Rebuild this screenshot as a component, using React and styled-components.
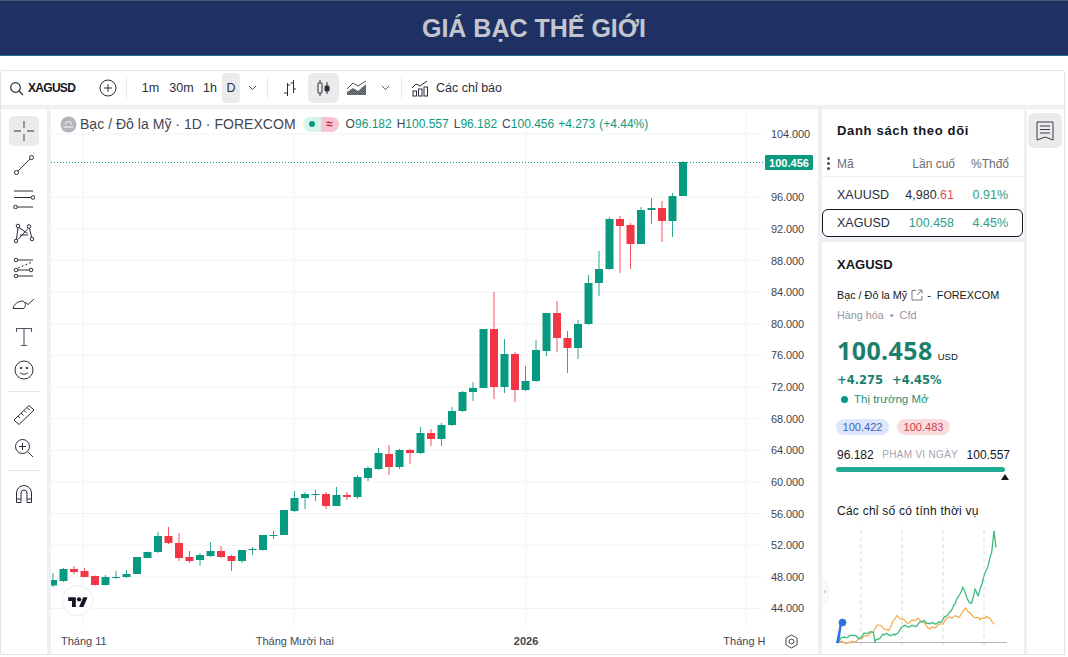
import React from "react";
import styled, { createGlobalStyle } from "styled-components";

const GREEN = "#089981";
const RED = "#f23645";
const INK = "#2a2e39";

const Global = createGlobalStyle`
  html, body { margin: 0; padding: 0; background: #fff; overflow: hidden; }
  body { width: 1068px; height: 657px; font-family: "Liberation Sans", Arial, sans-serif; color: #131722; }
`;

// candle: [up?, bodyTop, bodyBottom, wickTop, wickBottom]
const CANDLES = [
  [1,580,585.5,573,587],[1,569,581,568,582],[0,569,572,566,574],[0,571,577,568,577],[0,576,585,575.5,585.5],
  [1,577,585,575,585.5],[1,577,577.8,571,579],[1,574,577,570,578],[1,557,574,557,574],[1,552,558,551.5,558],
  [1,536,552,532,553],[0,536,543,527,544],[0,543,558,533,561],[0,557,561,551,563],[1,555,560,553,566],
  [1,551,556,542,557],[0,551,557,546,558],[0,556,561,555,571],[1,550,561,550,563],[1,549,550,547,555],
  [1,535,550,535,550.5],[1,535,535.8,531,539],[1,510,535,510,535],[1,498,511,491,512],[1,494,498,492,509],
  [1,494,494.8,490,501],[0,494,506,492,509],[1,495,506,487,506],[0,495,497,492,500],[1,477,497,475,499],
  [1,468,478,466,481],[1,453,469,448,470],[0,454,467,445,475],[1,450,467,449,469],[0,450,453,449,464],
  [1,433,453,427,454],[0,433,439,429,446],[1,425,439,423,446],[1,411,425,407,426],[1,392,411,391,412],
  [1,388,392,382,401],[1,329,388,329,388],[0,329,387,292,399],[1,354,387,339,393],[0,354,390,352,402],
  [1,381,390,366,391],[1,350,381,340,382],[1,313,351,313,356],[0,313,338,301,352],[0,338,348,331,373],
  [1,324,348,320,359],[1,283,324,275,325],[1,269,283,251,296],[1,219,269,217,270],[0,219,226,216,273],
  [0,225,244,223,269],[1,210,244,207,244],[1,208,210,198,224],[0,208,221,201,242],[1,196,221,193,237],
  [1,162,196,161,196],
];

const PRICES = ["104.000","100.000","96.000","92.000","88.000","84.000","80.000","76.000","72.000","68.000","64.000","60.000","56.000","52.000","48.000","44.000"];
const GRID_Y = PRICES.map((_, i) => 134 + i * 31.63);
const GRID_X = [83, 294, 526, 746];

const GREEN_LINE = [[50,460],[70,445],[100,440],[120,447],[135,432],[160,430],[165,458],[190,436],[225,438],[250,412],[285,412],[310,395],[330,405],[360,400],[385,375],[405,345],[428,295],[445,335],[455,342],[465,300],[475,320],[490,268],[503,235],[515,190],[522,125],[528,175]];
const ORANGE_LINE = [[50,458],[90,462],[120,450],[150,435],[175,408],[205,425],[230,380],[265,402],[295,387],[330,420],[365,405],[385,385],[420,382],[437,357],[455,378],[480,392],[500,382],[525,405]];

// zoomed crop coordinates to page coordinates, with a little wobble so it reads as a price line
function seasonal(points, amp) {
  const out = [];
  points.forEach((p, i) => {
    const next = points[i + 1];
    const x0 = 820 + p[0] / 3, y0 = 490 + p[1] / 3;
    if (!next) { out.push(`${x0},${y0}`); return; }
    const x1 = 820 + next[0] / 3, y1 = 490 + next[1] / 3;
    const steps = Math.max(1, Math.round((x1 - x0) / 1.2));
    for (let s = 0; s < steps; s++) {
      const t = s / steps;
      const n = s === 0 ? 0 : Math.sin((x0 + s) * 7.3) * amp;
      out.push(`${(x0 + (x1 - x0) * t).toFixed(1)},${(y0 + (y1 - y0) * t + n).toFixed(1)}`);
    }
  });
  return out.join(" ");
}

const Header = styled.header`
  height: 53px;
  background: #1f3163;
  border-top: 1px solid #4a5674;
  border-bottom: 1px solid #1d6a8c;
  display: flex;
  align-items: center;
  justify-content: center;
  padding-top: 1px;
  box-sizing: content-box;
  margin-bottom: 14px;
`;
const Title = styled.h1`
  margin: 0;
  font-size: 25px;
  line-height: 1;
  font-weight: 700;
  color: #c3c6cf;
`;
const Widget = styled.div`
  width: 1065px;
  height: 585px;
  box-sizing: border-box;
  background: #eef0f3;
  border: 1px solid #e0e3e8;
  border-radius: 3px 3px 0 0;
  display: flex;
  flex-direction: column;
  gap: 4px;
`;
const TopBar = styled.div`
  height: 34px;
  flex: none;
  background: #fff;
  display: flex;
  align-items: center;
  padding-left: 8px;
  font-size: 12.5px;
  color: ${INK};
`;
const Symbol = styled.span`
  font-weight: 700;
  font-size: 12px;
  margin-left: 4px;
  width: 69px;
  letter-spacing: -0.7px;
  color: #131722;
`;
const Sep = styled.span`
  width: 1px;
  height: 20px;
  background: #e6e8ec;
  margin: 0 ${(p) => p.$m || 8}px;
`;
const Interval = styled.span`
  height: 30px;
  width: ${(p) => p.$w || 24}px;
  display: flex;
  align-items: center;
  justify-content: center;
  border-radius: 4px;
  background: ${(p) => (p.$on ? "#ebebeb" : "transparent")};
`;
const IconBtn = styled.span`
  height: 30px;
  width: ${(p) => p.$w || 30}px;
  display: flex;
  align-items: center;
  justify-content: center;
  border-radius: 5px;
  background: ${(p) => (p.$on ? "#ebebeb" : "transparent")};
`;
const BarLabel = styled.span`
  margin-left: 4px;
`;
const Main = styled.div`
  flex: 1;
  min-height: 0;
  display: flex;
`;
const ToolRail = styled.nav`
  width: 46px;
  flex: none;
  background: #fff;
  display: flex;
  flex-direction: column;
  align-items: center;
  padding: 7px 0 0 0;
  box-sizing: border-box;
  margin-right: 4px;
`;
const Tool = styled.span`
  width: 30px;
  height: ${(p) => p.$h || 34.3}px;
  margin-bottom: ${(p) => p.$mb || 0}px;
  display: flex;
  align-items: center;
  justify-content: center;
  border-radius: 5px;
  flex: none;
  background: ${(p) => (p.$on ? "#ebebeb" : "transparent")};
`;
const ToolRule = styled.span`
  width: 32px;
  height: 1px;
  background: #e6e8ec;
  margin: 5px 0 6px;
  flex: none;
`;
const ChartPanel = styled.section`
  width: 767px;
  flex: none;
  background: #fff;
  position: relative;
  display: flex;
  flex-direction: column;
  margin-right: 4px;
`;
const PlotRow = styled.div`
  flex: 1;
  min-height: 0;
  display: flex;
`;
const Plot = styled.svg`
  width: 712px;
  height: 519px;
  display: block;
  flex: none;
`;
const PriceAxis = styled.div`
  flex: 1;
  padding: 9.2px 0 0 8px;
  display: grid;
  grid-auto-rows: 31.63px;
  align-items: center;
  font-size: 11px;
  color: #434651;
  letter-spacing: -0.1px;
`;
const Price = styled.span`
  visibility: ${(p) => (p.$hide ? "hidden" : "visible")};
`;
const PriceTag = styled.span`
  position: absolute;
  left: 714px;
  top: 46px;
  width: 48px;
  height: 15px;
  background: #0b9a80;
  color: #fff;
  font-size: 11px;
  font-weight: 700;
  display: flex;
  align-items: center;
  justify-content: center;
  border-radius: 1px;
`;
const Legend = styled.div`
  position: absolute;
  left: 9px;
  top: 6px;
  height: 18px;
  display: flex;
  align-items: center;
`;
const LegendTitle = styled.span`
  font-size: 14px;
  color: #434651;
  margin-left: 3px;
  letter-spacing: 0.03px;
  white-space: nowrap;
`;
const StatusPill = styled.span`
  display: flex;
  height: 15px;
  margin: 0 7px;
  width: 36px;
  border-radius: 8px;
  overflow: hidden;
  background: #d8f3ec;
  font-size: 12px;
`;
const PillDot = styled.span`
  flex: 1;
  display: flex;
  align-items: center;
  justify-content: center;
  &::before {
    content: "";
    width: 6px;
    height: 6px;
    border-radius: 50%;
    background: ${GREEN};
  }
`;
const PillDelayed = styled.span`
  width: 18px;
  background: #f9c4d2;
  color: #b3274a;
  display: flex;
  align-items: center;
  justify-content: center;
  font-weight: 700;
`;
const Ohlc = styled.span`
  font-size: 12px;
  color: #0b9a80;
  white-space: nowrap;
  margin-right: ${(p) => p.$mr || 0}px;
  b {
    font-weight: 400;
    color: #434651;
  }
`;
const Logo = styled.span`
  position: absolute;
  left: 12px;
  top: 477px;
  width: 29px;
  height: 29px;
  border-radius: 50%;
  background: #fff;
  box-shadow: 0 0 0 1px #eceef1;
  display: flex;
  align-items: center;
  justify-content: center;
`;
const TimeAxis = styled.div`
  height: 26px;
  flex: none;
  display: flex;
  align-items: center;
  padding-left: 10px;
  font-size: 11px;
  color: #434651;
  position: relative;
`;
const TimeLabel = styled.span`
  margin-right: ${(p) => p.$mr}px;
  font-weight: ${(p) => (p.$bold ? 700 : 400)};
  white-space: nowrap;
`;
const TimeClip = styled.span`
  width: 42px;
  overflow: hidden;
  white-space: nowrap;
`;
const Gear = styled.span`
  position: absolute;
  left: 733px;
  top: 6px;
  display: flex;
`;
const WatchColumn = styled.div`
  width: 202px;
  flex: none;
  display: flex;
  flex-direction: column;
  gap: 5px;
  position: relative;
  margin-right: 3px;
`;
const Handle = styled.span`
  position: absolute;
  left: 0;
  top: 471px;
  width: 5px;
  height: 21px;
  background: #fbfbfc;
  border: 1px solid #f0f1f3;
  border-left: 0;
  border-radius: 0 3px 3px 0;
  font-size: 8px;
  color: #9598a1;
  display: flex;
  align-items: center;
  justify-content: center;
`;
const WatchPanel = styled.div`
  background: #fff;
  height: 128px;
  flex: none;
  position: relative;
`;
const WatchTitle = styled.div`
  font-size: 13px;
  font-weight: 700;
  letter-spacing: 0.68px;
  padding: 14px 0 0 15px;
  height: 30px;
  box-sizing: border-box;
  color: #131722;
`;
const Grip = styled.span`
  position: absolute;
  left: 5px;
  top: 48px;
  width: 3px;
  height: 3px;
  border-radius: 50%;
  background: #50535e;
  box-shadow: 0 5px 0 #50535e, 0 10px 0 #50535e;
`;
const ColHead = styled.div`
  display: grid;
  grid-template-columns: 1fr 60px 54px;
  padding: 12px 15px 0 15px;
  height: 38px;
  align-items: center;
  font-size: 12px;
  color: #6a6d78;
  border-bottom: 1px solid #eceef1;
  box-sizing: border-box;
  text-align: right;
  span:first-child { text-align: left; }
`;
const Row = styled.div`
  display: grid;
  grid-template-columns: 1fr 60px 54px;
  padding: 0 14px;
  height: 26px;
  align-items: center;
  font-size: 12.5px;
  color: #2a2e39;
  text-align: right;
  border: 1px solid ${(p) => (p.$on ? "#131722" : "transparent")};
  border-radius: 6px;
  margin-right: 1px;
  margin-top: ${(p) => p.$mt || 0}px;
  box-sizing: content-box;
  span:first-child { text-align: left; }
`;
const Up = styled.span`
  color: #2f9e88;
`;
const Down = styled.span`
  color: #e0505c;
`;
const DetailPanel = styled.div`
  flex: 1;
  background: #fff;
  padding: 15px 0 0 15px;
  min-height: 0;
`;
const DetailSym = styled.div`
  font-size: 13px;
  font-weight: 700;
  line-height: 15px;
  color: #131722;
`;
const Desc = styled.div`
  font-size: 10.8px;
  line-height: 14px;
  margin-top: 16px;
  display: flex;
  align-items: center;
  white-space: nowrap;
  color: #131722;
  svg { margin: 0 4px; }
`;
const Meta = styled.div`
  font-size: 10.8px;
  line-height: 14px;
  margin-top: 6px;
  color: #9598a1;
`;
const Bullet = styled.span`
  margin: 0 6px;
`;
const BigPrice = styled.div`
  margin-top: 11px;
  display: flex;
  align-items: baseline;
  font-family: "Open Sans", "Liberation Sans", sans-serif;
  font-size: 25px;
  font-weight: 700;
  line-height: 34px;
  color: #1b7f6c;
  letter-spacing: 0.4px;
  span {
    font-family: "Liberation Sans", sans-serif;
    font-size: 9.5px;
    font-weight: 400;
    color: #131722;
    margin-left: 5px;
    letter-spacing: 0;
  }
`;
const Change = styled.div`
  display: flex;
  gap: 9px;
  margin-top: -2px;
  font-family: "DejaVu Sans", sans-serif;
  font-size: 11.5px;
  font-weight: 700;
  line-height: 16px;
  color: #1b7f6c;
`;
const Market = styled.div`
  display: flex;
  align-items: center;
  gap: 6px;
  margin: 3px 0 0 4px;
  font-size: 11.5px;
  line-height: 16px;
  color: #1f8f78;
  &::before {
    content: "";
    width: 7px;
    height: 7px;
    border-radius: 50%;
    background: ${GREEN};
  }
`;
const Quotes = styled.div`
  display: flex;
  gap: 8px;
  margin: 12px 0 0 -1px;
`;
const Quote = styled.span`
  width: ${(p) => p.$w}px;
  height: 16px;
  border-radius: 8px;
  font-size: 11px;
  display: flex;
  align-items: center;
  justify-content: center;
  background: ${(p) => p.$bg};
  color: ${(p) => p.$fg};
`;
const RangeLine = styled.div`
  display: flex;
  justify-content: space-between;
  width: 173px;
  margin-top: 13px;
  font-size: 12px;
  line-height: 14px;
  color: #131722;
  align-items: center;
  em {
    font-style: normal;
    font-size: 10px;
    color: #a3a6af;
    letter-spacing: 0.3px;
  }
`;
const RangeBar = styled.div`
  width: 169px;
  height: 5px;
  border-radius: 3px;
  background: #22ab94;
  margin: 5px 0 0 -1px;
  position: relative;
  &::after {
    content: "";
    position: absolute;
    right: -4px;
    top: 7px;
    border-left: 4px solid transparent;
    border-right: 4px solid transparent;
    border-bottom: 6px solid #131722;
  }
`;
const SeasonTitle = styled.div`
  font-size: 12px;
  line-height: 14px;
  margin-top: 32px;
  color: #131722;
  letter-spacing: 0.25px;
`;
const Season = styled.svg`
  display: block;
  width: 176px;
  height: 123px;
  margin: 8px 0 0 -1px;
`;
const SideStrip = styled.aside`
  flex: 1;
  background: #fff;
  padding: 4px 0 0 1px;
`;
const SideBtn = styled.span`
  width: 34px;
  height: 35px;
  border-radius: 6px;
  background: #ebebeb;
  display: flex;
  align-items: center;
  justify-content: center;
`;
const Glyph = styled.svg`
  display: block;
  fill: none;
  stroke: ${(p) => p.$c || INK};
  stroke-width: ${(p) => p.$sw || 1};
  margin-left: ${(p) => p.$ml || 0}px;
  flex: none;
`;

const Chevron = () => (
  <Glyph width="9" height="6" viewBox="0 0 9 6" $c="#50535e"><path d="M1 1l3.5 3.5L8 1" /></Glyph>
);

function Chart() {
  return (
    <Plot viewBox="51 109 712 519">
      {GRID_Y.map((y) => <line key={y} x1="51" x2="763" y1={y} y2={y} stroke="#f2f3f6" />)}
      {GRID_X.map((x) => <line key={x} x1={x} x2={x} y1="109" y2="628" stroke="#f2f3f6" />)}
      <line x1="51" x2="763" y1="162.5" y2="162.5" stroke={GREEN} strokeDasharray="1 2" />
      {CANDLES.map((c, i) => {
        const x = 53 + i * 10.5;
        const col = c[0] ? GREEN : RED;
        return (
          <g key={i}>
            <line x1={x} x2={x} y1={c[3]} y2={c[4]} stroke={col} strokeWidth="1" opacity="0.85" />
            <rect x={x - 4} y={c[1]} width="8" height={Math.max(1, c[2] - c[1])} fill={col} />
          </g>
        );
      })}
    </Plot>
  );
}

function SeasonChart() {
  return (
    <Season viewBox="836 527 176 123">
      {[861, 902, 943, 984].map((x) => (
        <line key={x} x1={x} x2={x} y1="524" y2="647" stroke="#d8dade" strokeDasharray="4 3" />
      ))}
      <line x1="836" x2="1007" y1="643.5" y2="643.5" stroke="#b2b5be" />
      <polyline points={seasonal(ORANGE_LINE, 1)} fill="none" stroke="#f5a94a" strokeWidth="1.2" />
      <polyline points={seasonal(GREEN_LINE, 1)} fill="none" stroke="#3dbb7c" strokeWidth="1.3" />
      <path d="M836 644l4-20 2 1-3 19z" fill="#2f6fe0" />
      <circle cx="842.5" cy="623.5" r="3.8" fill="#2f6fe0" />
    </Season>
  );
}

export default function App() {
  return (
    <>
      <Global />
      <Header><Title>GIÁ BẠC THẾ GIỚI</Title></Header>
      <Widget>
        <TopBar>
          <Glyph width="15" height="15" viewBox="0 0 15 15" $sw={1.2}><circle cx="6.5" cy="6.5" r="4.8" /><path d="M10 10l4 4" /></Glyph>
          <Symbol>XAGUSD</Symbol>
          <Glyph width="18" height="18" viewBox="0 0 18 18" $ml={2}><circle cx="9" cy="9" r="8" /><path d="M9 5v8M5 9h8" /></Glyph>
          <Sep $m={9} />
          <Interval $w={29}>1m</Interval>
          <Interval $w={33}>30m</Interval>
          <Interval $w={24}>1h</Interval>
          <Interval $w={18} $on>D</Interval>
          <IconBtn $w={24}><Chevron /></IconBtn>
          <Sep $m={3} />
          <IconBtn $w={37}>
            <Glyph width="14" height="18" viewBox="0 0 14 18"><path d="M4.5 4v13M1 14h3.5M4.5 6H7M10.5 1v13M7.5 4h3M10.5 10H13" /></Glyph>
          </IconBtn>
          <IconBtn $w={31} $on>
            <Glyph width="15" height="18" viewBox="0 0 15 18"><path d="M4 1v3M4 14v3M11 3v4M11 12v3" /><rect x="2" y="4" width="4" height="10" rx="0.5" /><rect x="9" y="7" width="4" height="5" rx="0.5" fill={INK} /></Glyph>
          </IconBtn>
          <IconBtn $w={36}>
            <Glyph width="22" height="16" viewBox="0 0 22 16" $c="#50535e">
              <defs><pattern id="hatch" width="2" height="2" patternUnits="userSpaceOnUse"><rect width="1" height="1" fill="#6a6d78" /><rect x="1" y="1" width="1" height="1" fill="#6a6d78" /></pattern></defs>
              <path d="M1 15v-3l6-4 5 3 8-7v11z" fill="url(#hatch)" stroke="none" />
              <path d="M1 9l6-6 5 3 8-5" />
            </Glyph>
          </IconBtn>
          <IconBtn $w={20}><Chevron /></IconBtn>
          <Sep $m={6} />
          <IconBtn $w={24}>
            <Glyph width="18" height="18" viewBox="0 0 18 18"><path d="M1 9l4-4 4 2 7-5" /><rect x="2" y="12" width="3.5" height="5" /><rect x="7.5" y="10" width="3.5" height="7" /><rect x="13" y="8" width="3.5" height="9" /></Glyph>
          </IconBtn>
          <BarLabel>Các chỉ báo</BarLabel>
        </TopBar>
        <Main>
          <ToolRail>
            <Tool $on $h={30} $mb={2}>
              <Glyph width="22" height="22" viewBox="0 0 22 22" $c="#6a6d78" $sw={1.3}><path d="M11 1v7M11 14v7M1 11h7M14 11h7" /></Glyph>
            </Tool>
            <Tool>
              <Glyph width="22" height="22" viewBox="0 0 22 22"><circle cx="3.5" cy="18.5" r="2" /><circle cx="18.5" cy="3.5" r="2" /><path d="M5 17L17 5" /></Glyph>
            </Tool>
            <Tool>
              <Glyph width="22" height="20" viewBox="0 0 22 20"><path d="M1 2h19M1 8.5h17M4 18h16" /><circle cx="20" cy="8.5" r="1.8" /><circle cx="2.5" cy="18" r="1.8" /></Glyph>
            </Tool>
            <Tool>
              <Glyph width="22" height="22" viewBox="0 0 22 22"><circle cx="5" cy="3" r="1.8" /><circle cx="16" cy="3.5" r="1.8" /><circle cx="3" cy="18" r="1.8" /><circle cx="19" cy="16" r="1.8" /><path d="M5 5L3.5 16M6 4.5l8.5 6M15 5.5l-10 11M16.5 5.5l2 8.5M7 12h8" /></Glyph>
            </Tool>
            <Tool>
              <Glyph width="22" height="22" viewBox="0 0 22 22"><circle cx="3" cy="3" r="1.8" /><circle cx="3" cy="13" r="1.8" /><circle cx="3" cy="19" r="1.8" /><circle cx="18" cy="13" r="1.8" /><path d="M5 3h15M5 13h11M5 19h15" /><path d="M5 11l14-6" strokeDasharray="2 2" /></Glyph>
            </Tool>
            <Tool>
              <Glyph width="24" height="22" viewBox="0 0 24 22"><path d="M1 17.5C2 13 6 10 11 10c3 2 3 5 1 7.5zM13 11l3 2.5L22 8" /></Glyph>
            </Tool>
            <Tool>
              <Glyph width="18" height="22" viewBox="0 0 18 22" $c="#50535e" $sw={1.1}><path d="M1.5 6V2.5h15V6M9 2.5v17M6 19.5h6" /></Glyph>
            </Tool>
            <Tool $h={32}>
              <Glyph width="20" height="20" viewBox="0 0 20 20"><circle cx="10" cy="10" r="9" /><circle cx="7" cy="8" r="0.8" fill={INK} /><circle cx="13" cy="8" r="0.8" fill={INK} /><path d="M6 12.5c2 2.2 6 2.2 8 0" /></Glyph>
            </Tool>
            <ToolRule />
            <Tool $h={34}>
              <Glyph width="22" height="22" viewBox="0 0 22 22"><path d="M1 16L16 1.5l5 4.5L6 20.5zM5 12l2 2M8 9l2.5 2.5M11 6.5l2 2M14 3.5l2.5 2.5" /></Glyph>
            </Tool>
            <Tool $h={33}>
              <Glyph width="20" height="20" viewBox="0 0 20 20"><circle cx="8.5" cy="8.5" r="7" /><path d="M13.5 13.5L19 19M5 8.5h7M8.5 5v7" /></Glyph>
            </Tool>
            <ToolRule />
            <Tool $h={34}>
              <Glyph width="18" height="20" viewBox="0 0 18 20"><path d="M1.5 18.5V9a7.5 7.5 0 0 1 15 0v9.5h-4.5V9a3 3 0 0 0-6 0v9.5zM1.5 15h4.5M12 15h4.5" /></Glyph>
            </Tool>
          </ToolRail>
          <ChartPanel>
            <PlotRow>
              <Chart />
              <PriceAxis>
                {PRICES.map((p) => <Price key={p} $hide={p === "100.000"}>{p}</Price>)}
              </PriceAxis>
            </PlotRow>
            <TimeAxis>
              <TimeLabel $mr={149}>Tháng 11</TimeLabel>
              <TimeLabel $mr={180}>Tháng Mười hai</TimeLabel>
              <TimeLabel $mr={185} $bold>2026</TimeLabel>
              <TimeClip>Tháng Hai</TimeClip>
              <Gear>
                <Glyph width="15" height="15" viewBox="0 0 15 15" $c="#434651"><path d="M7.5 1l5.6 3.2v6.6L7.5 14l-5.6-3.2V4.2z" /><circle cx="7.5" cy="7.5" r="2.4" /></Glyph>
              </Gear>
            </TimeAxis>
            <Legend>
              <Glyph width="17" height="17" viewBox="0 0 17 17" $c="#fff">
                <circle cx="8.5" cy="8.5" r="8" fill="#b2b5be" stroke="none" />
                <path d="M5.5 8.5a3 3 0 0 1 6 0M3.5 11h10" />
              </Glyph>
              <LegendTitle>Bạc / Đô la Mỹ · 1D · FOREXCOM</LegendTitle>
              <StatusPill><PillDot /><PillDelayed>≈</PillDelayed></StatusPill>
              <Ohlc $mr={5}><b>O</b>96.182</Ohlc>
              <Ohlc $mr={5}><b>H</b>100.557</Ohlc>
              <Ohlc $mr={5}><b>L</b>96.182</Ohlc>
              <Ohlc $mr={4}><b>C</b>100.456</Ohlc>
              <Ohlc $mr={4}>+4.273</Ohlc>
              <Ohlc>(+4.44%)</Ohlc>
            </Legend>
            <PriceTag>100.456</PriceTag>
            <Logo>
              <svg width="20" height="12" viewBox="0 0 36 22" fill="#131722"><path d="M14 22H7V11H0V4h14v18zM28 22h-8l7.5-18h8L28 22z" /><circle cx="20" cy="8" r="4" /></svg>
            </Logo>
          </ChartPanel>
          <WatchColumn>
            <WatchPanel>
              <WatchTitle>Danh sách theo dõi</WatchTitle>
              <Grip />
              <ColHead><span>Mã</span><span>Lần cuố</span><span>%Thđổ</span></ColHead>
              <Row $mt={4}>
                <span>XAUUSD</span>
                <span>4,980<Down>.61</Down></span>
                <Up>0.91%</Up>
              </Row>
              <Row $on>
                <span>XAGUSD</span>
                <Up>100.458</Up>
                <Up>4.45%</Up>
              </Row>
            </WatchPanel>
            <DetailPanel>
              <DetailSym>XAGUSD</DetailSym>
              <Desc>
                Bạc / Đô la Mỹ
                <Glyph width="12" height="12" viewBox="0 0 12 12" $c="#787b86"><path d="M5 1.5H1v9.5h10V7M6 6l5-5M7.5 1H11v3.5" /></Glyph>
                -&nbsp;&nbsp;FOREXCOM
              </Desc>
              <Meta>Hàng hóa<Bullet>•</Bullet>Cfd</Meta>
              <BigPrice>100.458<span>USD</span></BigPrice>
              <Change><span>+4.275</span><span>+4.45%</span></Change>
              <Market>Thị trường Mở</Market>
              <Quotes>
                <Quote $w={53} $bg="#dde6fb" $fg="#3f62c9">100.422</Quote>
                <Quote $w={53} $bg="#f9dadd" $fg="#c9424f">100.483</Quote>
              </Quotes>
              <RangeLine><span>96.182</span><em>PHẠM VI NGÀY</em><span>100.557</span></RangeLine>
              <RangeBar />
              <SeasonTitle>Các chỉ số có tính thời vụ</SeasonTitle>
              <SeasonChart />
            </DetailPanel>
            <Handle>›</Handle>
          </WatchColumn>
          <SideStrip>
            <SideBtn>
              <Glyph width="18" height="20" viewBox="0 0 18 20" $c="#3b3e48"><path d="M1 1h16v18l-8-3-8 3zM4 5h10M4 8.5h10M4 12h10" /></Glyph>
            </SideBtn>
          </SideStrip>
        </Main>
      </Widget>
    </>
  );
}
